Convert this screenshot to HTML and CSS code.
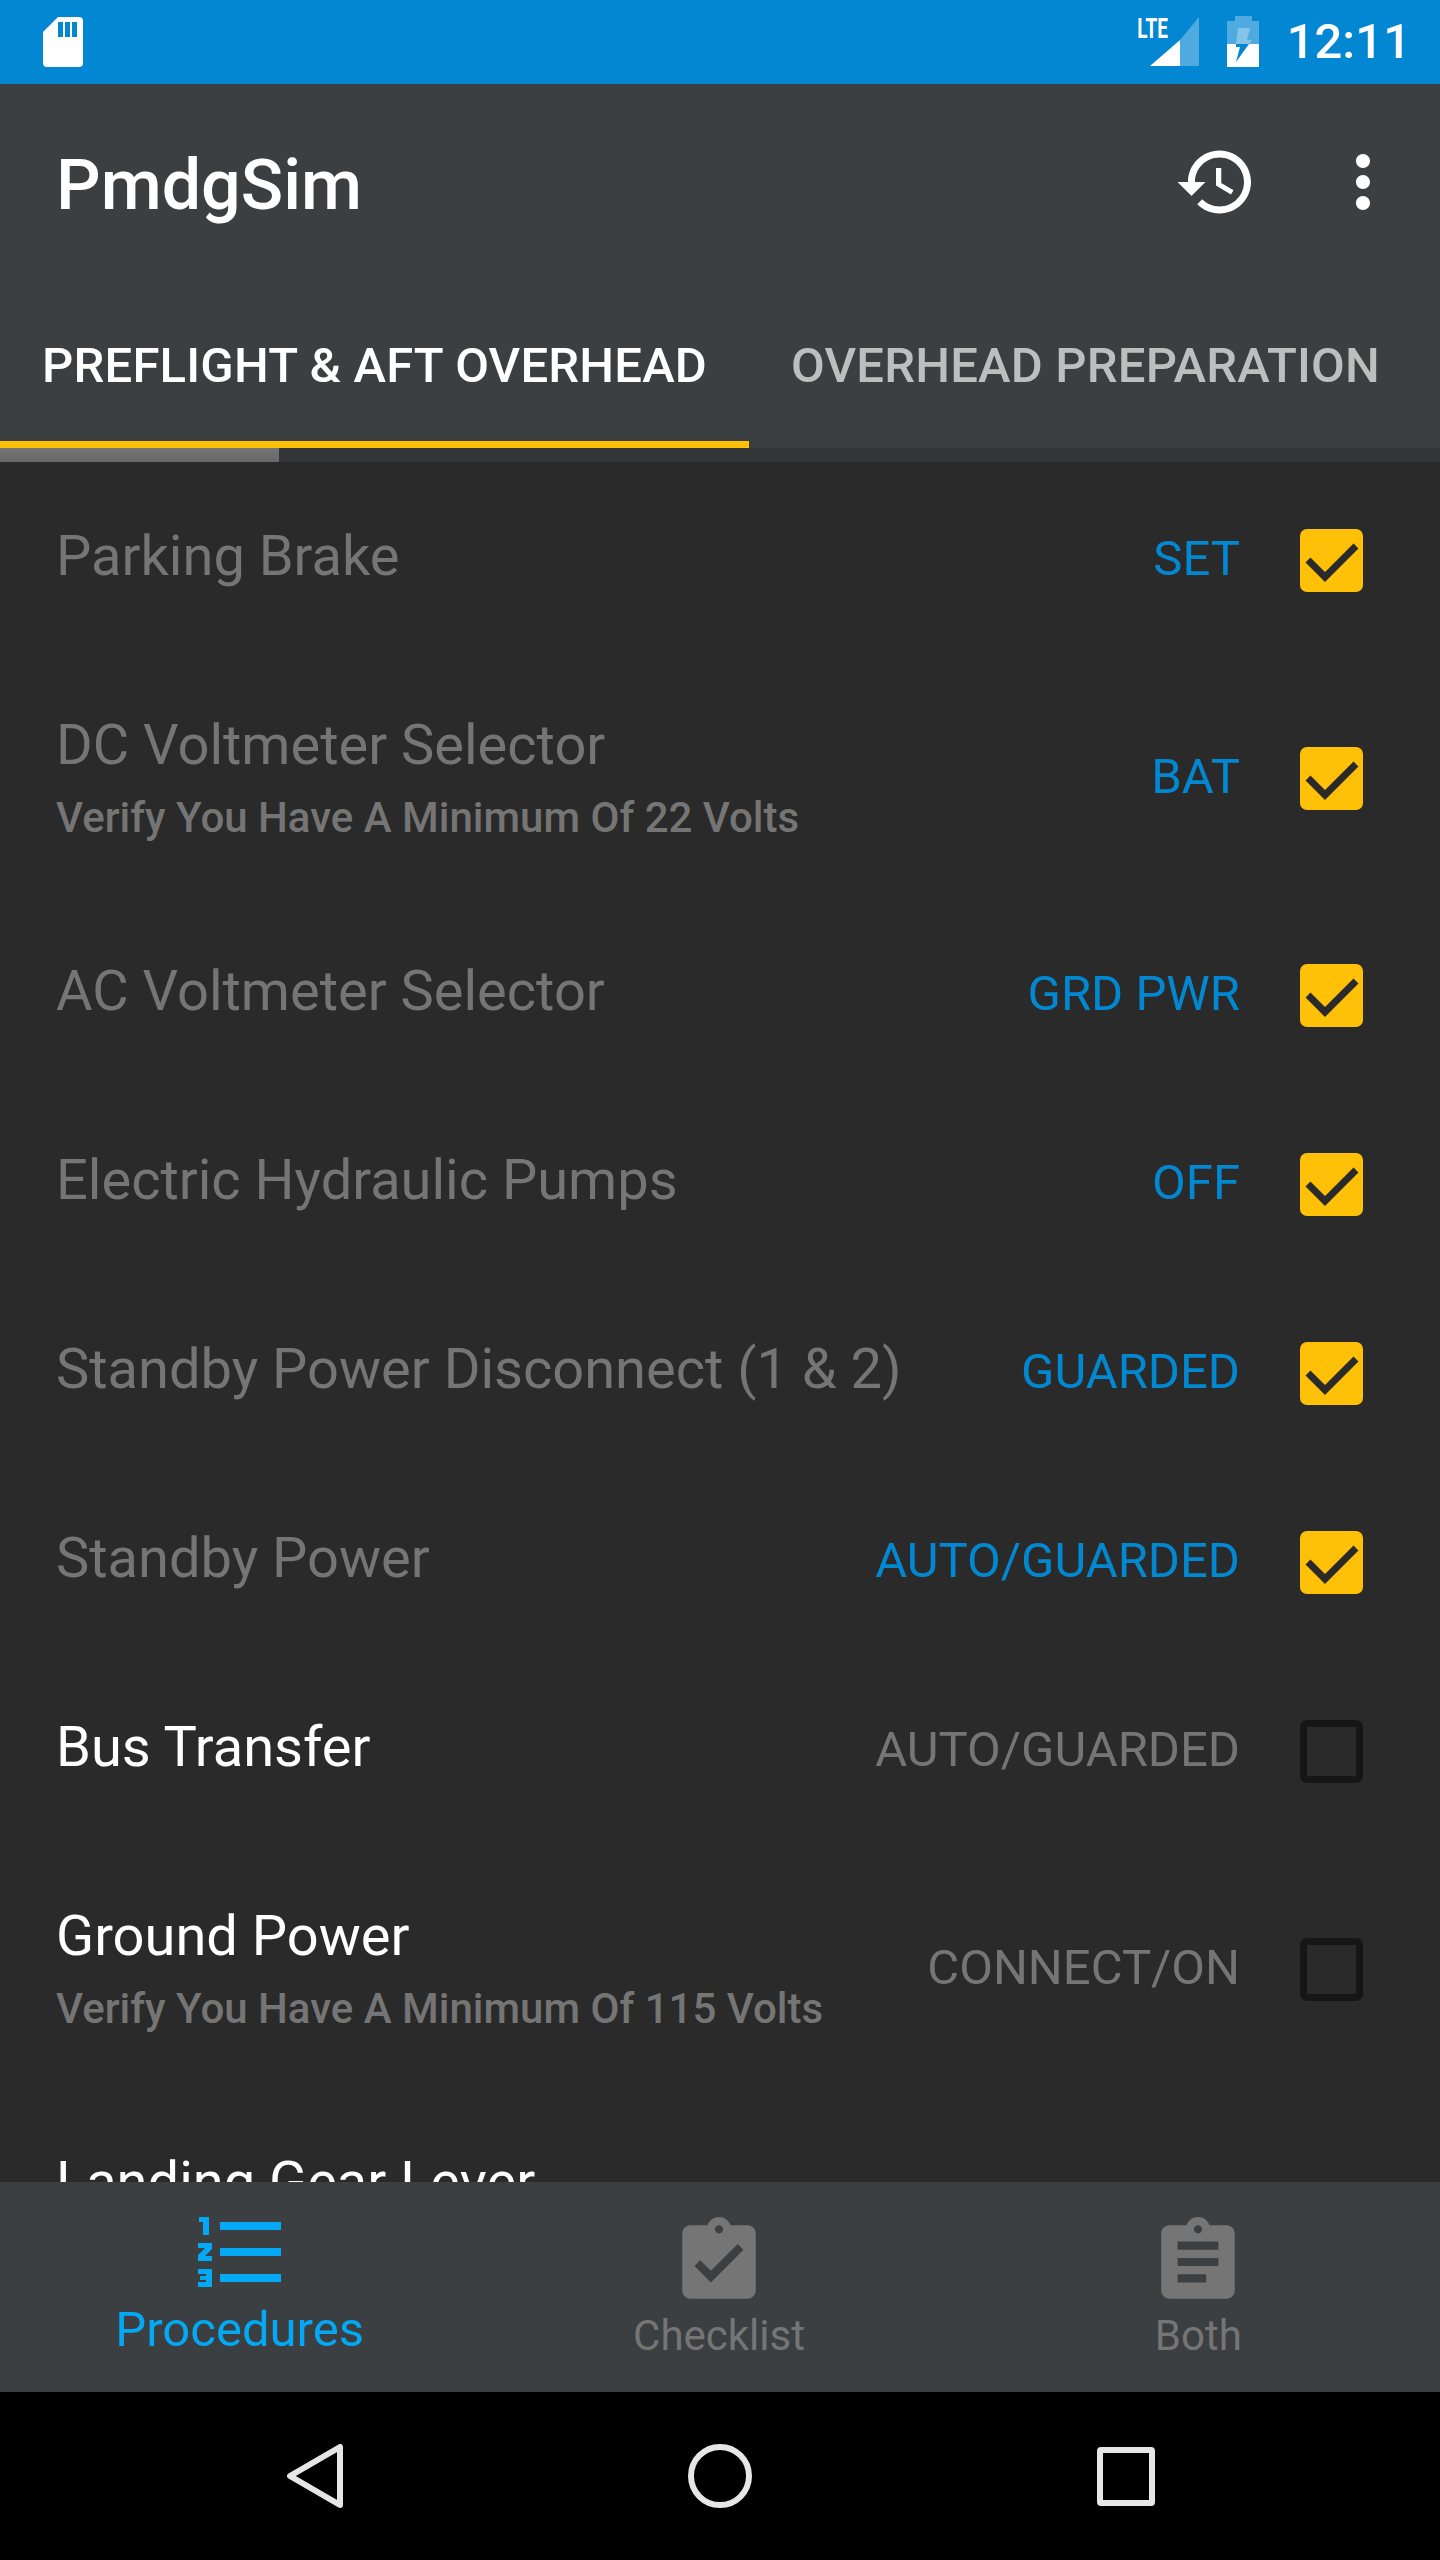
FILE: index.html
```html
<!DOCTYPE html>
<html lang="en">
<head>
  <meta charset="UTF-8" />
  <title>PmdgSim</title>
  <link rel="stylesheet" href="styles.css">
</head>
<body>

  <header class="status-bar">
    <svg class="sd-icon" width="40" height="50" viewBox="0 0 40 50">
      <path fill="#fff" d="M15 0H36a4 4 0 0 1 4 4V46a4 4 0 0 1-4 4H4a4 4 0 0 1-4-4V15z"/>
      <path fill="#0487d2" d="M15 5h5v15h-5zM22 5h5v15h-5zM29 5h5v15h-5z"/>
    </svg>
    <div class="status-right">
      <div class="signal">
        <span class="lte">LTE</span>
        <svg width="49" height="49" viewBox="0 0 49 49">
          <path fill="#fff" fill-opacity="0.3" d="M49 0V49H30V23z"/>
          <path fill="#fff" d="M30 23V49H0z"/>
        </svg>
      </div>
      <svg class="battery" width="32" height="51" viewBox="0 0 32 51">
        <path fill="#fff" fill-opacity="0.3" d="M8 0H25V5H32V28H0V5H8z"/>
        <path fill="#fff" d="M0 28H32V51H0z"/>
        <path fill="#fff" fill-opacity="0.3" d="M11 12H23L20 24H25L22 28H9z"/>
        <path fill="#0487d2" d="M9 28H22L9 46L13 31H9z"/>
      </svg>
      <span class="clock">12:11</span>
    </div>
  </header>

  <div class="app-bar">
    <h1>PmdgSim</h1>
    <svg class="bar-icon history" viewBox="0 0 24 24"><path d="M13 3c-4.97 0-9 4.03-9 9H1l3.89 3.89.07.14L9 12H6c0-3.87 3.13-7 7-7s7 3.13 7 7-3.13 7-7 7c-1.93 0-3.68-.79-4.94-2.06l-1.42 1.42C8.27 19.99 10.51 21 13 21c4.97 0 9-4.03 9-9s-4.03-9-9-9zm-1 5v5l4.28 2.54.72-1.21-3.5-2.08V8H12z"/></svg>
    <svg class="bar-icon more" viewBox="0 0 24 24"><path d="M12 8c1.1 0 2-.9 2-2s-.9-2-2-2-2 .9-2 2 .9 2 2 2zm0 2c-1.1 0-2 .9-2 2s.9 2 2 2 2-.9 2-2-.9-2-2-2zm0 6c-1.1 0-2 .9-2 2s.9 2 2 2 2-.9 2-2-.9-2-2-2z"/></svg>
  </div>

  <nav class="tabs">
    <a class="tab active">PREFLIGHT &amp; AFT OVERHEAD</a>
    <a class="tab">OVERHEAD PREPARATION</a>
  </nav>

  <div class="progress"><div class="progress-fill"></div></div>

  <main class="list">
    <div class="row done">
      <div class="row-text"><div class="title">Parking Brake</div></div>
      <div class="value">SET</div>
      <div class="check on"><svg viewBox="0 0 63 63"><path d="M8 31L25 48L56 17"/></svg></div>
    </div>
    <div class="row done">
      <div class="row-text">
        <div class="title">DC Voltmeter Selector</div>
        <div class="note">Verify You Have A Minimum Of 22 Volts</div>
      </div>
      <div class="value">BAT</div>
      <div class="check on"><svg viewBox="0 0 63 63"><path d="M8 31L25 48L56 17"/></svg></div>
    </div>
    <div class="row done">
      <div class="row-text"><div class="title">AC Voltmeter Selector</div></div>
      <div class="value">GRD PWR</div>
      <div class="check on"><svg viewBox="0 0 63 63"><path d="M8 31L25 48L56 17"/></svg></div>
    </div>
    <div class="row done">
      <div class="row-text"><div class="title">Electric Hydraulic Pumps</div></div>
      <div class="value">OFF</div>
      <div class="check on"><svg viewBox="0 0 63 63"><path d="M8 31L25 48L56 17"/></svg></div>
    </div>
    <div class="row done">
      <div class="row-text"><div class="title">Standby Power Disconnect (1 &amp; 2)</div></div>
      <div class="value">GUARDED</div>
      <div class="check on"><svg viewBox="0 0 63 63"><path d="M8 31L25 48L56 17"/></svg></div>
    </div>
    <div class="row done">
      <div class="row-text"><div class="title">Standby Power</div></div>
      <div class="value">AUTO/GUARDED</div>
      <div class="check on"><svg viewBox="0 0 63 63"><path d="M8 31L25 48L56 17"/></svg></div>
    </div>
    <div class="row">
      <div class="row-text"><div class="title">Bus Transfer</div></div>
      <div class="value">AUTO/GUARDED</div>
      <div class="check"></div>
    </div>
    <div class="row">
      <div class="row-text">
        <div class="title">Ground Power</div>
        <div class="note">Verify You Have A Minimum Of 115 Volts</div>
      </div>
      <div class="value">CONNECT/ON</div>
      <div class="check"></div>
    </div>
    <div class="row">
      <div class="row-text"><div class="title">Landing Gear Lever</div></div>
    </div>
  </main>

  <nav class="bottom-nav">
    <a class="bottom-item active">
      <svg class="list-icon" width="83" height="70" viewBox="0 0 83 70">
        <path d="M22 5h61v8H22zM22 31h61v8H22zM22 57h61v8H22z"/>
        <path d="M1 0H11V18H5V5H1z"/>
        <path d="M0 26H14V32L7 39H14V44H0V38L7 31H0z"/>
        <path d="M0 52H14V70H0V65H8V63H2V59H8V57H0z"/>
      </svg>
      <span>Procedures</span>
    </a>
    <a class="bottom-item">
      <svg class="clip-icon" viewBox="0 0 24 24"><path d="M19 3h-4.18C14.4 1.84 13.3 1 12 1c-1.3 0-2.4.84-2.82 2H5c-1.1 0-2 .9-2 2v14c0 1.1.9 2 2 2h14c1.1 0 2-.9 2-2V5c0-1.1-.9-2-2-2zm-7 0c.55 0 1 .45 1 1s-.45 1-1 1-1-.45-1-1 .45-1 1-1zm-2 14l-4-4 1.41-1.41L10 14.17l6.59-6.59L18 9l-8 8z"/></svg>
      <span>Checklist</span>
    </a>
    <a class="bottom-item">
      <svg class="clip-icon" viewBox="0 0 24 24"><path d="M19 3h-4.18C14.4 1.84 13.3 1 12 1c-1.3 0-2.4.84-2.82 2H5c-1.1 0-2 .9-2 2v14c0 1.1.9 2 2 2h14c1.1 0 2-.9 2-2V5c0-1.1-.9-2-2-2zm-7 0c.55 0 1 .45 1 1s-.45 1-1 1-1-.45-1-1 .45-1 1-1zm2 14H7v-2h7v2zm3-4H7v-2h10v2zm0-4H7V7h10v2z"/></svg>
      <span>Both</span>
    </a>
  </nav>

  <footer class="system-nav">
    <svg width="56" height="64" viewBox="0 0 56 64"><path d="M53 3V61L3 32z"/></svg>
    <svg width="64" height="64" viewBox="0 0 64 64"><circle cx="32" cy="32" r="29"/></svg>
    <svg width="58" height="59" viewBox="0 0 58 59"><rect x="3" y="3" width="52" height="53" rx="1"/></svg>
  </footer>

</body>
</html>
```

FILE: styles.css
```css
* {
  box-sizing: border-box;
}

body {
  margin: 0;
  width: 1440px;
  height: 2560px;
  display: flex;
  flex-direction: column;
  overflow: hidden;
  font-family: Roboto, sans-serif;
  background-color: #2a2a2a;
}

.status-bar {
  height: 84px;
  flex: none;
  display: flex;
  align-items: center;
  justify-content: space-between;
  padding: 0 29px 0 43px;
  background: #0487d2;
}

.sd-icon {
  margin-top: -1px;
}

.status-right {
  display: flex;
  align-items: center;
}

.signal {
  position: relative;
  width: 49px;
  height: 49px;
  margin-top: -1px;
  margin-right: 28px;
}

.lte {
  position: absolute;
  left: -20px;
  top: -4px;
  font-size: 28px;
  font-weight: 700;
  line-height: 32px;
  color: #fff;
  transform: scaleX(0.68);
}

.battery {
  margin-right: 28px;
  margin-top: -1px;
}

.clock {
  font-size: 49px;
  font-weight: 500;
  line-height: 60px;
  color: #fff;
}

.app-bar {
  height: 196px;
  flex: none;
  display: flex;
  align-items: center;
  padding-left: 56px;
  background: #3c3f41;
}

.app-bar h1 {
  flex: 1;
  margin: 6px 0 0;
  font-size: 70px;
  font-weight: 500;
  color: #fff;
}

.bar-icon {
  width: 84px;
  height: 84px;
  fill: #fff;
}

.history {
  margin-right: 63px;
}

.more {
  margin-right: 35px;
}

.tabs {
  height: 168px;
  flex: none;
  display: flex;
  overflow: hidden;
  background: #3c3f41;
}

.tab {
  flex: none;
  height: 168px;
  padding: 2px 42px 0;
  display: flex;
  align-items: center;
  font-size: 49px;
  font-weight: 500;
  letter-spacing: 0.2px;
  color: #bdbfbf;
}

.tab.active {
  color: #fff;
  border-bottom: 7px solid #ffc107;
  padding-top: 9px;
}

.progress {
  height: 14px;
  flex: none;
  background: #333537;
}

.progress-fill {
  width: 279px;
  height: 100%;
  background: linear-gradient(to bottom, #757575, #686868);
}

.list {
  flex: 1;
  min-height: 0;
  overflow: hidden;
  padding-top: 4px;
  background: #2a2a2a;
}

.row {
  min-height: 189px;
  display: flex;
  align-items: center;
  padding: 62px 77px 62px 56px;
}

.row-text {
  flex: 1;
  min-width: 0;
}

.title {
  font-size: 56px;
  line-height: 57px;
  color: #fff;
}

.title:only-child {
  margin-bottom: 8px;
}

.note {
  margin-top: 23px;
  font-size: 42px;
  font-weight: 500;
  line-height: 42px;
  color: #757575;
}

.value {
  margin-right: 60px;
  margin-bottom: 4px;
  font-size: 49px;
  color: #757575;
}

.done .title {
  color: #757575;
}

.done .value {
  color: #0288d1;
}

.check {
  width: 63px;
  height: 63px;
  flex: none;
  border: 7px solid #161616;
  border-radius: 7px;
}

.check.on {
  border: 0;
  background: #ffc107;
}

.check svg {
  display: block;
  fill: none;
  stroke: #2a2a2a;
  stroke-width: 7;
}

.bottom-nav {
  height: 210px;
  flex: none;
  display: grid;
  grid-template-columns: repeat(3, 1fr);
  padding-right: 2px;
  background: #3c3f41;
}

.bottom-item {
  display: flex;
  flex-direction: column;
  align-items: center;
  font-size: 42px;
  line-height: 50px;
  color: #757575;
}

.bottom-item.active {
  font-size: 49px;
  line-height: 60px;
  color: #03a9f4;
}

.list-icon {
  margin-top: 35px;
  margin-bottom: 13px;
  fill: #03a9f4;
}

.clip-icon {
  width: 98px;
  height: 98px;
  margin-top: 31px;
  fill: #757575;
}

.system-nav {
  height: 168px;
  flex: none;
  display: flex;
  justify-content: center;
  align-items: center;
  gap: 345px;
  padding-left: 1px;
  background: #000;
}

.system-nav svg {
  fill: none;
  stroke: #e6e6e6;
  stroke-width: 6;
  stroke-linejoin: round;
}
```
